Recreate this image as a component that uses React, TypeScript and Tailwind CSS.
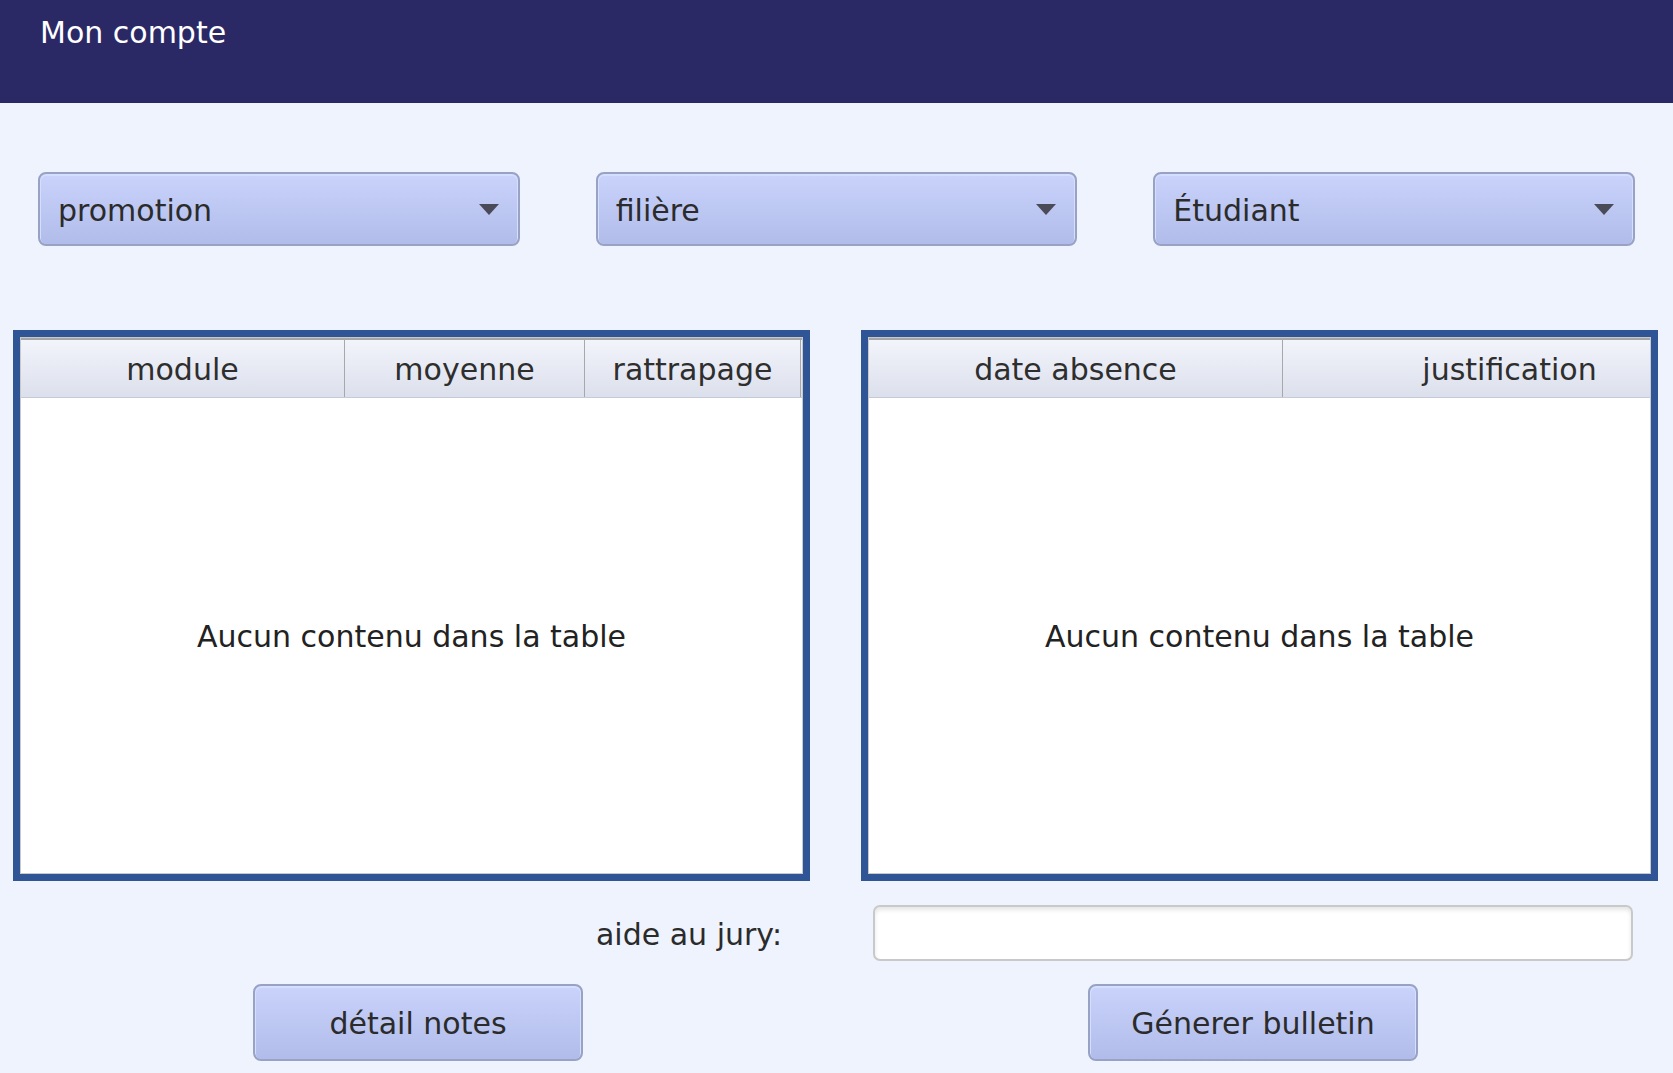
const SELECTS = ["promotion", "filière", "Étudiant"];

const NOTES_COLS = [
  { label: "module", width: "w-[324px]" },
  { label: "moyenne", width: "w-[240px]" },
  { label: "rattrapage", width: "w-[216px]" },
];

const ABS_COLS = [
  { label: "date absence", width: "w-[414px]" },
  { label: "justification", width: "w-[454px]" },
];

function Select({ label }: { label: string }) {
  return (
    <div className="flex h-[74px] items-center justify-between rounded-[8px] border-2 border-[#97a2c5] bg-gradient-to-b from-[#c9d3fb] to-[#b1bcea] pl-[18px] pr-[19px] shadow-[inset_0_1px_0_1px_#d6defd]">
      <span className="pt-[3px] text-[#2b2b2b]">{label}</span>
      <svg width="20" height="11" viewBox="0 0 20 11">
        <path d="M0 0 L20 0 L10 11 Z" fill="#4a4a58" />
      </svg>
    </div>
  );
}

function Table({ cols }: { cols: { label: string; width: string }[] }) {
  return (
    <div className="flex h-[551px] w-[797px] flex-col border-[7px] border-[#2f5597] bg-white">
      <div className="flex flex-1 flex-col overflow-hidden border border-[#c9c9c9]">
        <div className="flex h-[60px] shrink-0 border-t-2 border-b border-t-[#a5a5a5] border-b-[#c5cad8] bg-gradient-to-b from-[#f2f4fb] to-[#dce0ec]">
          {cols.map((c) => (
            <div
              key={c.label}
              className={`${c.width} flex shrink-0 items-center justify-center border-r border-[#a8a8a8] pt-[2px] text-[#2e2e2e]`}
            >
              {c.label}
            </div>
          ))}
        </div>
        <div className="flex flex-1 items-center justify-center pt-[2px] text-[#222]">
          Aucun contenu dans la table
        </div>
      </div>
    </div>
  );
}

function Button({ label }: { label: string }) {
  return (
    <button className="flex h-[77px] w-[330px] items-center justify-center rounded-[8px] border-2 border-[#97a2c5] bg-gradient-to-b from-[#c9d3fb] to-[#b1bcea] pt-[2px] text-[#2b2b2b] shadow-[inset_0_1px_0_1px_#d6defd]">
      {label}
    </button>
  );
}

export default function App() {
  return (
    <div className="min-h-screen bg-[#eff3fe] font-['DejaVu_Sans',sans-serif] text-[30px] leading-[36px]">
      <header className="h-[103px] bg-[#2a2966] pl-[40px] pt-[15px] text-white">
        Mon compte
      </header>

      <div className="mt-[69px] grid grid-cols-3 gap-[76px] px-[38px]">
        {SELECTS.map((s) => (
          <Select key={s} label={s} />
        ))}
      </div>

      <div className="mt-[84px] flex gap-[51px] pl-[13px]">
        <Table cols={NOTES_COLS} />
        <Table cols={ABS_COLS} />
      </div>

      <div className="mt-[24px] flex gap-[51px] pl-[13px]">
        <div className="flex w-[797px] items-center justify-end pr-[28px] pt-[3px] text-[#2b2b2b]">
          aide au jury:
        </div>
        <div className="w-[797px] pl-[12px]">
          <div className="h-[56px] w-[760px] rounded-[7px] border-2 border-[#c9c9c9] bg-white shadow-[inset_0_3px_4px_#e6e6e6]" />
        </div>
      </div>

      <div className="mt-[23px] flex gap-[51px] pl-[13px]">
        <div className="w-[797px] pl-[240px]">
          <Button label="détail notes" />
        </div>
        <div className="w-[797px] pl-[227px]">
          <Button label="Génerer bulletin" />
        </div>
      </div>
    </div>
  );
}
